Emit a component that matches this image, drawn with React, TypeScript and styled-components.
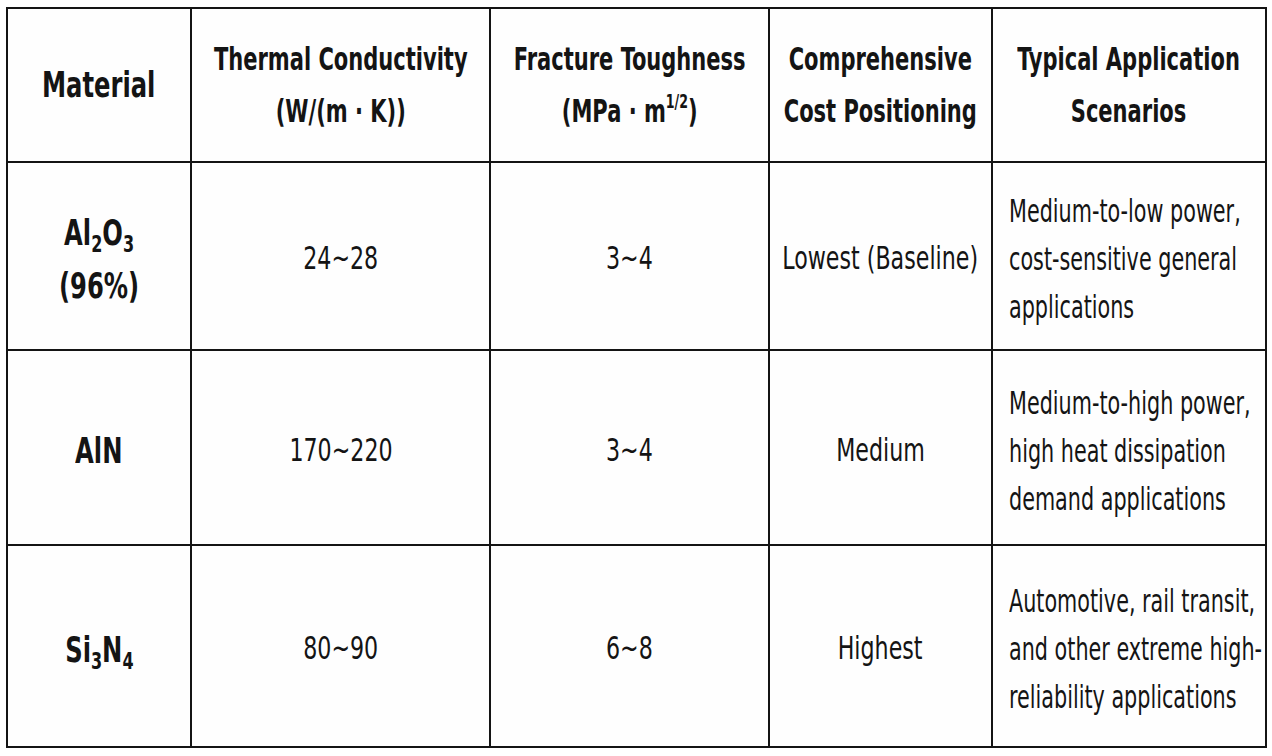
import React from "react";
import styled, { createGlobalStyle } from "styled-components";

const GlobalStyle = createGlobalStyle`
  html, body {
    margin: 0;
    padding: 0;
    background: #ffffff;
  }
  body {
    font-family: "DejaVu Sans Condensed", "Liberation Sans", sans-serif;
    color: #141414;
  }
`;

interface Row {
  material: React.ReactNode[];
  conductivity: string;
  toughness: string;
  cost: string;
  scenario: string[];
  height: number;
}

const rows: Row[] = [
  {
    material: [
      <>
        Al<sub>2</sub>O<sub>3</sub>
      </>,
      "(96%)",
    ],
    conductivity: "24~28",
    toughness: "3~4",
    cost: "Lowest (Baseline)",
    scenario: ["Medium-to-low power,", "cost-sensitive general", "applications"],
    height: 188,
  },
  {
    material: ["AlN"],
    conductivity: "170~220",
    toughness: "3~4",
    cost: "Medium",
    scenario: ["Medium-to-high power,", "high heat dissipation", "demand applications"],
    height: 195,
  },
  {
    material: [
      <>
        Si<sub>3</sub>N<sub>4</sub>
      </>,
    ],
    conductivity: "80~90",
    toughness: "6~8",
    cost: "Highest",
    scenario: ["Automotive, rail transit,", "and other extreme high-", "reliability applications"],
    height: 202,
  },
];

const headers: React.ReactNode[][] = [
  ["Thermal Conductivity", "(W/(m · K))"],
  [
    "Fracture Toughness",
    <>
      (MPa · m<sup>1/2</sup>)
    </>,
  ],
  ["Comprehensive", "Cost Positioning"],
  ["Typical Application", "Scenarios"],
];

const Page = styled.div`
  padding: 7px 0 0 6px;
  overflow: hidden;
`;

const Table_styled = styled.table`
  border-collapse: collapse;
  table-layout: fixed;
  width: 1261px;
  background: #fefefe;
`;

const CellBody = styled.div<{ $left?: boolean }>`
  display: flex;
  justify-content: ${(p) => (p.$left ? "flex-start" : "center")};
`;

// the reference face is a tall condensed sans; squeeze the installed one to match
const Squeeze = styled.span<{ $left?: boolean; $scale: number }>`
  flex-shrink: 0;
  white-space: nowrap;
  text-align: ${(p) => (p.$left ? "left" : "center")};
  transform: scaleX(${(p) => p.$scale});
  transform-origin: ${(p) => (p.$left ? "left center" : "center center")};

  sub {
    font-size: 0.66em;
    vertical-align: -0.3em;
    line-height: 0;
  }
  sup {
    font-size: 0.6em;
    vertical-align: 0.72em;
    line-height: 0;
  }
`;

const Line = styled.div``;

const TH = styled.th`
  border: 2px solid #141414;
  font-weight: 700;
  font-size: 32px;
  line-height: 52px;
  vertical-align: middle;
  padding: 0;
`;

const MaterialTH = styled(TH)`
  font-size: 35px;
`;

const TD = styled.td<{ $left?: boolean }>`
  border: 2px solid #141414;
  font-size: 32px;
  line-height: 48px;
  vertical-align: middle;
  padding: ${(p) => (p.$left ? "6px 0 0 16px" : "4px 0 0")};
`;

const MaterialTD = styled(TD)`
  font-weight: 700;
  font-size: 35px;
  line-height: 53px;
  padding-top: 8px;
`;

const TR = styled.tr<{ $h: number }>`
  height: ${(p) => p.$h}px;
`;

const widths = [184, 299, 279, 223, 274];

const Lines = ({
  lines,
  left,
  scale = 0.77,
}: {
  lines: React.ReactNode[];
  left?: boolean;
  scale?: number;
}) => (
  <CellBody $left={left}>
    <Squeeze $left={left} $scale={scale}>
      {lines.map((line, i) => (
        <Line key={i}>{line}</Line>
      ))}
    </Squeeze>
  </CellBody>
);

export default function App() {
  return (
    <>
      <GlobalStyle />
      <Page>
        <Table_styled>
          <colgroup>
            {widths.map((w, i) => (
              <col key={i} style={{ width: w }} />
            ))}
          </colgroup>
          <thead>
            <TR $h={154}>
              <MaterialTH>
                <Lines lines={["Material"]} />
              </MaterialTH>
              {headers.map((h, i) => (
                <TH key={i}>
                  <Lines lines={h} scale={0.73} />
                </TH>
              ))}
            </TR>
          </thead>
          <tbody>
            {rows.map((row, i) => (
              <TR key={i} $h={row.height}>
                <MaterialTD>
                  <Lines lines={row.material} />
                </MaterialTD>
                <TD>
                  <Lines lines={[row.conductivity]} />
                </TD>
                <TD>
                  <Lines lines={[row.toughness]} />
                </TD>
                <TD>
                  <Lines lines={[row.cost]} />
                </TD>
                <TD $left>
                  <Lines lines={row.scenario} left scale={0.72} />
                </TD>
              </TR>
            ))}
          </tbody>
        </Table_styled>
      </Page>
    </>
  );
}
